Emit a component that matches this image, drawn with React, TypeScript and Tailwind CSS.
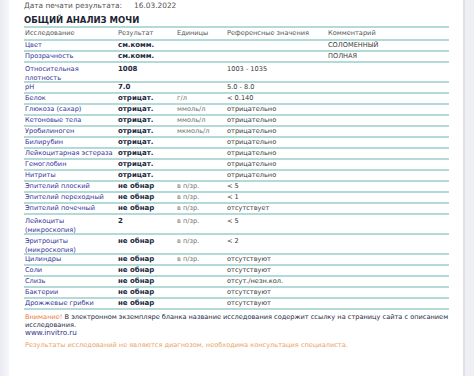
const rows = [
  { name: "Цвет", result: "см.комм.", unit: "", ref: "", comment: "СОЛОМЕННЫЙ" },
  { name: "Прозрачность", result: "см.комм.", unit: "", ref: "", comment: "ПОЛНАЯ" },
  { name: "Относительная\nплотность", result: "1008", unit: "", ref: "1003 - 1035", double: true },
  { name: "pH", result: "7.0", unit: "", ref: "5.0 - 8.0" },
  { name: "Белок", result: "отрицат.", unit: "г/л", ref: "< 0.140" },
  { name: "Глюкоза (сахар)", result: "отрицат.", unit: "ммоль/л", ref: "отрицательно" },
  { name: "Кетоновые тела", result: "отрицат.", unit: "ммоль/л", ref: "отрицательно" },
  { name: "Уробилиноген", result: "отрицат.", unit: "мкмоль/л", ref: "отрицательно" },
  { name: "Билирубин", result: "отрицат.", unit: "", ref: "отрицательно" },
  { name: "Лейкоцитарная эстераза", result: "отрицат.", unit: "", ref: "отрицательно" },
  { name: "Гемоглобин", result: "отрицат.", unit: "", ref: "отрицательно" },
  { name: "Нитриты", result: "отрицат.", unit: "", ref: "отрицательно" },
  { name: "Эпителий плоский", result: "не обнар", unit: "в п/зр.", ref: "< 5" },
  { name: "Эпителий переходный", result: "не обнар", unit: "в п/зр.", ref: "< 1" },
  { name: "Эпителий почечный", result: "не обнар", unit: "в п/зр.", ref: "отсутствует" },
  { name: "Лейкоциты\n(микроскопия)", result: "2", unit: "в п/зр.", ref: "< 5", double: true },
  { name: "Эритроциты\n(микроскопия)", result: "не обнар", unit: "в п/зр.", ref: "< 2", double: true },
  { name: "Цилиндры", result: "не обнар", unit: "в п/зр.", ref: "отсутствуют" },
  { name: "Соли", result: "не обнар", unit: "", ref: "отсутствуют" },
  { name: "Слизь", result: "не обнар", unit: "", ref: "отсут./незн.кол." },
  { name: "Бактерии", result: "не обнар", unit: "", ref: "отсутствуют" },
  { name: "Дрожжевые грибки", result: "не обнар", unit: "", ref: "отсутствуют" },
];

const cols = "grid grid-cols-[94px_59px_50px_100px_122px]";

export default function App() {
  return (
    <div className="flex w-[474px] h-[376px] overflow-hidden bg-white font-['DejaVu_Sans',sans-serif]">
      {/* page edge, left */}
      <div className="w-[9px] bg-gradient-to-r from-[#e9ebf1] to-[#f6f7fa]" />

      <div className="flex-1 pl-[15px]">
        {/* print date */}
        <div className="flex h-[11px] items-center text-[7.4px] text-[#555] whitespace-nowrap">
          <span className="w-[110px]">Дата печати результата:</span>
          <span>16.03.2022</span>
        </div>

        <h1 className="mt-[4px] h-[11px] leading-[11px] text-[8.5px] font-bold text-[#1d2433]">
          ОБЩИЙ АНАЛИЗ МОЧИ
        </h1>

        {/* table */}
        <div className="w-[425px] border-t-2 border-[#b3dad6] text-[6.6px] whitespace-nowrap">
          <div className={`${cols} h-[13px] items-center border-b-2 border-[#b3dad6] text-[#555]`}>
            <span className="pl-[1px]">Исследование</span>
            <span>Результат</span>
            <span>Единицы</span>
            <span>Референсные значения</span>
            <span className="pl-[1px]">Комментарий</span>
          </div>
          {rows.map((r) => (
            <div
              key={r.name}
              className={`${cols} border-b-2 border-[#b3dad6] leading-[8.5px] ${
                r.double ? "h-[20px] items-start pt-[2px]" : "h-[11px] items-center"
              }`}
            >
              <span className="pl-[1px] text-[#34349a] whitespace-pre-line">{r.name}</span>
              <span className="font-bold text-[7px] text-[#1b2740]">{r.result}</span>
              <span className="text-[#707070]">{r.unit}</span>
              <span className="text-[#3a3a3a]">{r.ref}</span>
              <span className="text-[#3a3a3a] pl-[1px]">{r.comment ?? ""}</span>
            </div>
          ))}
        </div>

        {/* footer notes */}
        <div className="mt-[4px] w-[430px] pl-[1px] text-[6.6px] leading-[7.5px] text-[#1d2a45]">
          <p>
            <span className="text-[#ec7a3c]">Внимание!</span> В электронном экземпляре бланка
            название исследования содержит ссылку на страницу сайта с описанием исследования.
          </p>
          <p className="text-[7.2px] leading-[8px] text-[#2f2f8c]">www.invitro.ru</p>
          <p className="mt-[5px] text-[#eaa266]">
            Результаты исследований не являются диагнозом, необходима консультация специалиста.
          </p>
        </div>
      </div>

      {/* page edge, right */}
      <div className="w-[11px] border-l-2 border-[#dfe0e8] bg-[#eeeff4]" />
    </div>
  );
}
